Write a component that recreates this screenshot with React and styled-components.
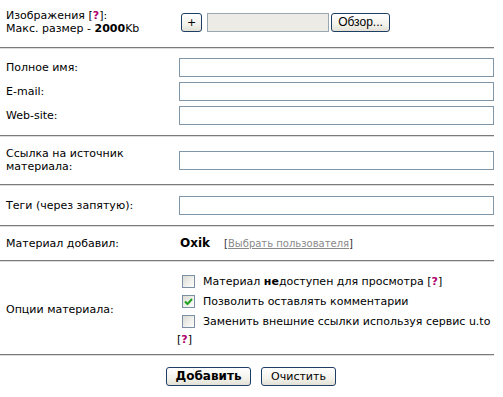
import React from "react";
import styled, { createGlobalStyle } from "styled-components";

const Global = createGlobalStyle`
  html, body { margin: 0; padding: 0; background: #fff; }
  body { font-family: "DejaVu Sans", Verdana, sans-serif; font-size: 11px; color: #000; }
`;

const Form = styled.form`
  width: 494px;
  display: flex;
  flex-direction: column;
`;

const Section = styled.div`
  display: grid;
  grid-template-columns: 173px 1fr;
  padding: ${(p) => p.$pad || "10px 0 11px"};
  padding-left: 6px;
  align-items: center;
`;

const StackSection = styled.div`
  display: flex;
  flex-direction: column;
  gap: 5px;
  padding: ${(p) => p.$pad || "10px 0 11px"};
  padding-left: 6px;
`;

const Divider = styled.div`
  height: 0;
  border-top: 1px solid #7a7a7a;
  border-bottom: 1px solid #dcdcdc;
`;

const Label = styled.div`
  line-height: 13px;
`;

const FieldRow = styled.div`
  display: grid;
  grid-template-columns: 173px 1fr;
  align-items: center;
  height: 19px;
`;

const TextInput = styled.input`
  box-sizing: border-box;
  width: 315px;
  height: 19px;
  border: 1px solid #7f97a8;
  background: #fff;
  padding: 0 3px;
  font: inherit;
  outline: none;
`;

const Help = styled.span`
  color: #b0006c;
  font-weight: bold;
`;

const Bold = styled.b`
  font-weight: bold;
`;

const UploadRow = styled.div`
  display: flex;
  align-items: center;
  height: 26px;
  padding-left: 2px;
`;

const XpButton = styled.button`
  box-sizing: border-box;
  height: 19px;
  width: ${(p) => p.$w}px;
  margin-left: ${(p) => p.$ml || 0}px;
  border: 1px solid #1f3e66;
  border-radius: 3px;
  background: linear-gradient(#ffffff, #f3f2ec 60%, #e3e1d6);
  font-family: ${(p) => (p.$tahoma ? '"Liberation Sans", Arial, sans-serif' : '"DejaVu Sans", Verdana, sans-serif')};
  font-size: ${(p) => p.$fs || 11}px;
  font-weight: ${(p) => (p.$bold ? "bold" : "normal")};
  color: #000;
  padding: 0;
  line-height: 17px;
  cursor: pointer;
`;

const FileBox = styled.div`
  box-sizing: border-box;
  width: 122px;
  height: 19px;
  margin-left: 5px;
  border: 1px solid #9aa6b0;
  background: #ecebe5;
`;

const Author = styled.div`
  display: flex;
  align-items: baseline;
  gap: 14px;
  height: 19px;
  line-height: 19px;
  padding-left: 1px;
`;

const UserName = styled.span`
  font-weight: bold;
  font-size: 12px;
`;

const PickUser = styled.span`
  font-size: 10px;
  color: #333;
  a {
    color: #8a8a8a;
    text-decoration: underline;
  }
`;

const Options = styled.div`
  display: flex;
  flex-direction: column;
`;

const OptionRow = styled.label`
  display: flex;
  align-items: center;
  height: 20px;
  gap: 8px;
  padding-left: 3px;
`;

const Box = styled.span`
  box-sizing: border-box;
  width: 13px;
  height: 13px;
  flex: none;
  border: 1px solid #7a8fa3;
  background: linear-gradient(135deg, #dcdcd4, #f8f8f6 80%, #fff);
  display: flex;
  align-items: center;
  justify-content: center;
`;

const HelpLine = styled.div`
  line-height: 14px;
  padding: 2px 0 0 0;
  margin-left: -2px;
`;

const ButtonBar = styled.div`
  display: flex;
  padding: 11px 0 0 166px;
  gap: 10px;
`;

function Checkbox({ checked }) {
  return (
    <Box>
      {checked && (
        <svg width="9" height="9" viewBox="0 0 9 9">
          <path d="M1 4.5 L3.5 7 L8 2" fill="none" stroke="#21a121" strokeWidth="2" />
        </svg>
      )}
    </Box>
  );
}

export default function App() {
  return (
    <>
      <Global />
      <Form onSubmit={(e) => e.preventDefault()}>
        <Section $pad="9px 0 12px">
          <Label>
            Изображения [<Help>?</Help>]:
            <br />
            Макс. размер - <Bold>2000</Bold>Kb
          </Label>
          <UploadRow>
            <XpButton type="button" $w={21}>+</XpButton>
            <FileBox />
            <XpButton type="button" $w={59} $ml={2} $tahoma $fs={12}>Обзор...</XpButton>
          </UploadRow>
        </Section>
        <Divider />
        <StackSection $pad="9px 0 10px">
          <FieldRow>
            <Label>Полное имя:</Label>
            <TextInput />
          </FieldRow>
          <FieldRow>
            <Label>E-mail:</Label>
            <TextInput />
          </FieldRow>
          <FieldRow>
            <Label>Web-site:</Label>
            <TextInput />
          </FieldRow>
        </StackSection>
        <Divider />
        <Section $pad="10px 0 11px">
          <Label>
            Ссылка на источник
            <br />
            материала:
          </Label>
          <TextInput />
        </Section>
        <Divider />
        <Section $pad="10px 0 10px">
          <Label>Теги (через запятую):</Label>
          <TextInput />
        </Section>
        <Divider />
        <Section $pad="7px 0 7px">
          <Label>Материал добавил:</Label>
          <Author>
            <UserName>Oxik</UserName>
            <PickUser>
              [<a href="#">Выбрать пользователя</a>]
            </PickUser>
          </Author>
        </Section>
        <Divider />
        <Section $pad="9px 0 7px">
          <Label>Опции материала:</Label>
          <Options>
            <OptionRow>
              <Checkbox />
              <span>
                Материал <Bold>не</Bold>доступен для просмотра [<Help>?</Help>]
              </span>
            </OptionRow>
            <OptionRow>
              <Checkbox checked />
              <span>Позволить оставлять комментарии</span>
            </OptionRow>
            <OptionRow>
              <Checkbox />
              <span>Заменить внешние ссылки используя сервис u.to</span>
            </OptionRow>
            <HelpLine>
              [<Help>?</Help>]
            </HelpLine>
          </Options>
        </Section>
        <Divider />
        <ButtonBar>
          <XpButton type="submit" $w={85} $bold $fs={12}>Добавить</XpButton>
          <XpButton type="button" $w={75}>Очистить</XpButton>
        </ButtonBar>
      </Form>
    </>
  );
}
